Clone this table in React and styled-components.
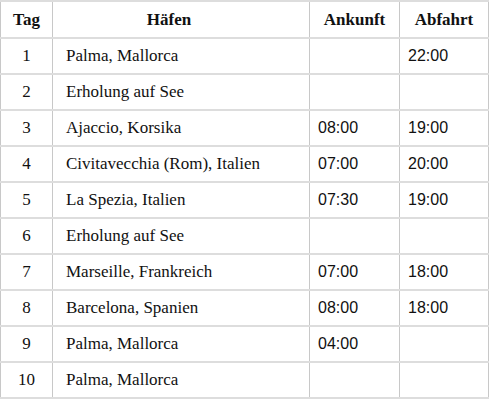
import React from "react";
import styled, { createGlobalStyle } from "styled-components";

const stops = [
  { tag: 1, port: "Palma, Mallorca", arr: "", dep: "22:00" },
  { tag: 2, port: "Erholung auf See", arr: "", dep: "" },
  { tag: 3, port: "Ajaccio, Korsika", arr: "08:00", dep: "19:00" },
  { tag: 4, port: "Civitavecchia (Rom), Italien", arr: "07:00", dep: "20:00" },
  { tag: 5, port: "La Spezia, Italien", arr: "07:30", dep: "19:00" },
  { tag: 6, port: "Erholung auf See", arr: "", dep: "" },
  { tag: 7, port: "Marseille, Frankreich", arr: "07:00", dep: "18:00" },
  { tag: 8, port: "Barcelona, Spanien", arr: "08:00", dep: "18:00" },
  { tag: 9, port: "Palma, Mallorca", arr: "04:00", dep: "" },
  { tag: 10, port: "Palma, Mallorca", arr: "", dep: "" },
];

const GlobalStyle = createGlobalStyle`
  body {
    margin: 0;
    background: #fff;
    font-family: "Liberation Serif", "Times New Roman", serif;
    color: #111;
  }
`;

const Table = styled.table`
  width: 488px;
  table-layout: fixed;
  border-collapse: collapse;
  font-size: 17px;
  th, td {
    border-top: 2px solid #dddddd;
    border-bottom: 2px solid #dddddd;
    border-left: 1px solid #c8c8c8;
    border-right: 1px solid #c8c8c8;
  }
`;

const Col = styled.col`
  width: ${(p) => p.$w}px;
`;

const Row = styled.tr`
  height: ${(p) => (p.$head ? 37 : 36)}px;
`;

const Head = styled.th`
  font-weight: bold;
  text-align: center;
  padding: 0 ${(p) => p.$pr || 2}px 0 2px;
`;

const TagCell = styled.td`
  text-align: center;
  padding: 0;
`;

const PortCell = styled.td`
  padding: 0 8px 0 13px;
`;

const TimeCell = styled.td`
  font-family: "Liberation Sans", Arial, sans-serif;
  font-size: 16px;
  padding: 0 8px;
`;

export default function App() {
  return (
    <>
      <GlobalStyle />
      <Table>
        <colgroup>
          <Col $w={52} />
          <Col $w={257} />
          <Col $w={90} />
          <Col $w={89} />
        </colgroup>
        <thead>
          <Row $head>
            <Head>Tag</Head>
            <Head $pr={26}>Häfen</Head>
            <Head>Ankunft</Head>
            <Head>Abfahrt</Head>
          </Row>
        </thead>
        <tbody>
          {stops.map((s) => (
            <Row key={s.tag}>
              <TagCell>{s.tag}</TagCell>
              <PortCell>{s.port}</PortCell>
              <TimeCell>{s.arr}</TimeCell>
              <TimeCell>{s.dep}</TimeCell>
            </Row>
          ))}
        </tbody>
      </Table>
    </>
  );
}
